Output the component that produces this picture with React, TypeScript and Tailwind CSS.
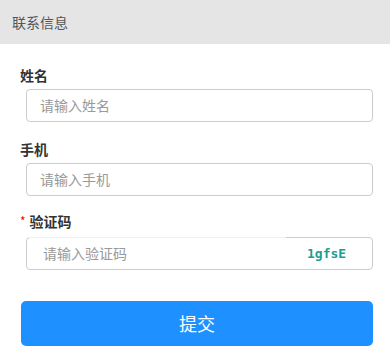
const font = "font-['Noto_Sans_CJK_SC','Noto_Sans',sans-serif]";

function Field({ label, placeholder, required }: { label: string; placeholder: string; required?: boolean }) {
  return (
    <div>
      <div className="flex h-5 items-center text-[14px] font-bold leading-5 text-[#333]">
        {required && <span className="mr-[4px] text-[12px] font-normal text-[#f00]">*</span>}
        {label}
      </div>
      <div className="ml-[6px] mt-[4px] flex h-[33px] items-center rounded-[4px] border border-[#ccc] px-[13px] text-[14px] text-[#999]">
        {placeholder}
      </div>
    </div>
  );
}

export default function App() {
  return (
    <div className={`h-[355px] w-[390px] bg-white ${font}`}>
      <div className="flex h-[44px] items-center bg-[#e5e5e5] px-3 text-[14px] text-[#555]">联系信息</div>
      <div className="pl-5 pr-[17px] pt-[21px]">
        <Field label="姓名" placeholder="请输入姓名" />
        <div className="h-[17px]" />
        <Field label="手机" placeholder="请输入手机" />
        <div className="h-[15px]" />
        <div>
          <div className="flex h-5 items-center text-[14px] font-bold leading-5 text-[#333]">
            <span className="mr-[4px] text-[12px] font-normal text-[#f00]">*</span>
            验证码
          </div>
          <div className="ml-[6px] mt-[6px] flex h-[33px] rounded-[4px] border border-[#ccc]">
            <div className="-mt-px flex flex-1 items-center border-t border-[#f0f0f0] pl-[16px] text-[14px] text-[#999]">
              请输入验证码
            </div>
            <div className="flex w-[86px] items-center pl-[21px] font-['DejaVu_Sans_Mono',monospace] text-[13px] font-bold text-[#1a9e8f]">
              1gfsE
            </div>
          </div>
        </div>
        <button className="ml-px mt-[31px] flex h-[45px] w-[352px] items-center justify-center rounded-[5px] bg-[#1e90ff] text-[18px] text-white">
          提交
        </button>
      </div>
    </div>
  );
}
